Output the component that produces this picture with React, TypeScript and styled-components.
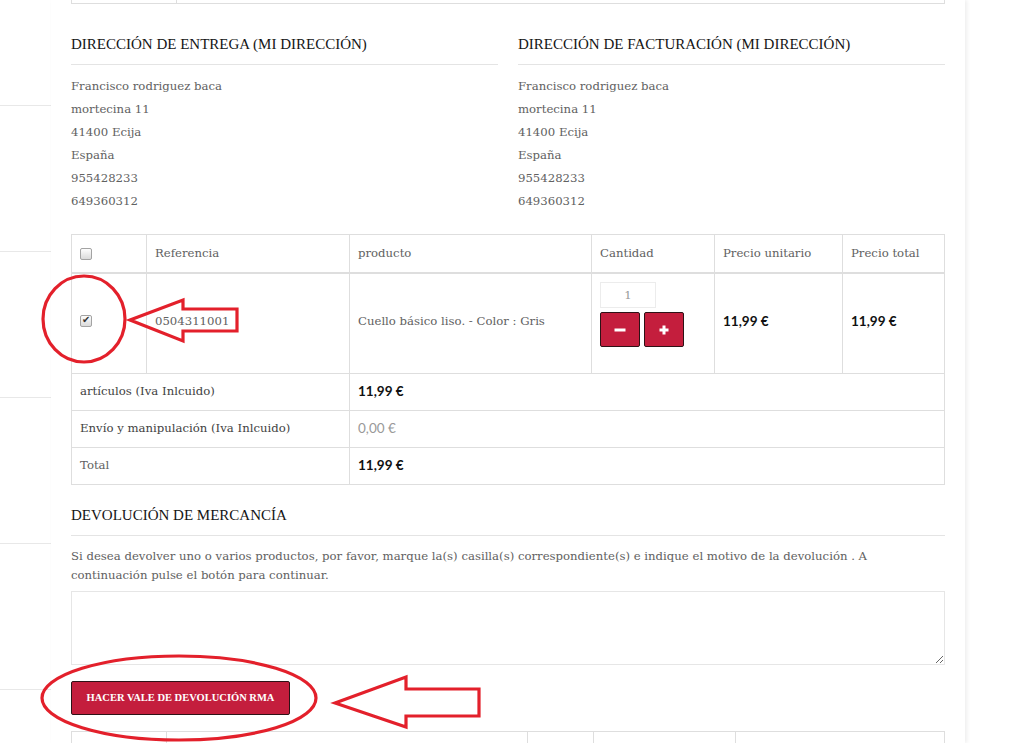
import React from "react";
import styled, { createGlobalStyle } from "styled-components";

const GlobalStyle = createGlobalStyle`
  html, body {
    margin: 0;
    padding: 0;
    background: #fff;
    overflow: hidden;
  }
  body {
    font-family: "DejaVu Serif", serif;
  }
`;

const Page = styled.div`
  position: relative;
  display: flex;
  width: 1024px;
  height: 743px;
  overflow: hidden;
  background: #fff;
`;

const Sidebar = styled.aside`
  width: 51px;
  flex-shrink: 0;
`;

const SideItem = styled.div<{ $h: number }>`
  height: ${(p) => p.$h}px;
  border-bottom: 1px solid #e8e8e8;
`;

const Main = styled.main`
  width: 914px;
  flex-shrink: 0;
  padding: 0 20px;
  box-sizing: border-box;
  box-shadow: 2px 0 4px rgba(0, 0, 0, 0.07);
`;

const TopStub = styled.div`
  display: flex;
  height: 3px;
  border: 1px solid #dedede;
  border-top: none;
`;

const StubCell = styled.div`
  width: 104px;
  border-right: 1px solid #dedede;
`;

const Addresses = styled.section`
  display: grid;
  grid-template-columns: 1fr 1fr;
  column-gap: 20px;
  margin-top: 30px;
`;

const Heading = styled.h3`
  margin: 0;
  padding-bottom: 10px;
  border-bottom: 1px solid #e4e4e4;
  font-family: "Liberation Serif", serif;
  font-weight: normal;
  font-size: 15px;
  line-height: 20px;
  color: #151515;
`;

const AddressLines = styled.div`
  margin-top: 10px;
  font-size: 11.7px;
  line-height: 23px;
  color: #616161;
`;

const Table = styled.table`
  width: 100%;
  border-collapse: collapse;
  margin-top: 21px;
  font-size: 11.7px;
  color: #616161;
  table-layout: fixed;
`;

const Th = styled.th`
  border: 1px solid #dedede;
  border-bottom-width: 2px;
  padding: 8px;
  height: 21px;
  line-height: 21px;
  font-weight: normal;
  text-align: left;
`;

const Td = styled.td<{ $top?: boolean; $dark?: boolean }>`
  border: 1px solid #dedede;
  padding: 6px 8px 7px;
  line-height: 22px;
  vertical-align: ${(p) => (p.$top ? "top" : "middle")};
  color: ${(p) => (p.$dark ? "#424242" : "#616161")};
`;

const ItemRow = styled.tr`
  height: 100px;

  & > td {
    padding-top: 7px;
    padding-bottom: 11px;
  }
  & > td:nth-child(4) {
    padding-top: 8px;
  }
`;

const Check = styled.input.attrs({ type: "checkbox" })`
  appearance: none;
  position: relative;
  display: block;
  width: 12px;
  height: 12px;
  margin: 0;
  border: 1px solid #a3a3a3;
  border-radius: 2px;
  background: linear-gradient(#fdfdfd, #dadada);

  &:checked::after {
    content: "✔";
    position: absolute;
    left: 1px;
    top: -2px;
    font-family: "DejaVu Sans", sans-serif;
    font-size: 10px;
    color: #333;
  }
`;

const QtyInput = styled.input`
  display: block;
  width: 56px;
  height: 26px;
  box-sizing: border-box;
  border: 1px solid #ececec;
  text-align: center;
  font-family: "DejaVu Serif", serif;
  font-size: 11.7px;
  color: #999;
  outline: none;
`;

const QtyButtons = styled.div`
  display: flex;
  gap: 4px;
  margin-top: 4px;
`;

const QtyButton = styled.button`
  display: flex;
  align-items: center;
  justify-content: center;
  width: 40px;
  height: 35px;
  padding: 0;
  background: #c41e3d;
  border: 1px solid #2e1216;
  border-radius: 2px;
`;

const Price = styled.span<{ $muted?: boolean }>`
  font-family: Lato, sans-serif;
  font-size: 13.5px;
  font-weight: ${(p) => (p.$muted ? 400 : 700)};
  color: ${(p) => (p.$muted ? "#999" : "#111")};
`;

const Returns = styled.section`
  margin-top: 20px;
`;

const Note = styled.p`
  margin: 11px 0 0;
  font-size: 11.7px;
  line-height: 19px;
  color: #616161;
`;

const Reason = styled.textarea`
  display: block;
  width: 100%;
  height: 74px;
  box-sizing: border-box;
  margin-top: 6px;
  border: 1px solid #e6e6e6;
  outline: none;
`;

const RmaButton = styled.button`
  display: block;
  width: 219px;
  height: 34px;
  margin-top: 16px;
  background: #c41e3d;
  border: 1px solid #2e1216;
  border-radius: 2px;
  font-family: "Liberation Serif", serif;
  font-weight: bold;
  font-size: 10.5px;
  color: #fff;
  text-transform: uppercase;
`;

const BottomTable = styled.table`
  width: 100%;
  border-collapse: collapse;
  margin-top: 16px;
  table-layout: fixed;
`;

const BottomCell = styled.td`
  height: 40px;
  border: 1px solid #dedede;
`;

const Annotations = styled.svg`
  position: absolute;
  left: 0;
  top: 0;
  pointer-events: none;
`;

const MinusIcon = () => (
  <svg width="12" height="4" viewBox="0 0 12 4">
    <rect x="0.5" y="0.5" width="11" height="3" fill="#fff" />
  </svg>
);

const PlusIcon = () => (
  <svg width="10" height="10" viewBox="0 0 10 10">
    <rect x="0.5" y="3.5" width="9" height="3" fill="#fff" />
    <rect x="3.5" y="0.5" width="3" height="9" fill="#fff" />
  </svg>
);

const address = [
  "Francisco rodriguez baca",
  "mortecina 11",
  "41400 Ecija",
  "España",
  "955428233",
  "649360312",
];

const itemCols = [75, 203, 242, 123, 128, 102];
const bottomCols = [95, 361, 66, 142, 209];

const AddressBlock = ({ title }: { title: string }) => (
  <div>
    <Heading>{title}</Heading>
    <AddressLines>
      {address.map((line) => (
        <div key={line}>{line}</div>
      ))}
    </AddressLines>
  </div>
);

export default function App() {
  return (
    <>
      <GlobalStyle />
      <Page>
        <Sidebar>
          {[105, 145, 145, 145, 145].map((h, i) => (
            <SideItem key={i} $h={h} />
          ))}
        </Sidebar>

        <Main>
          <TopStub>
            <StubCell />
          </TopStub>

          <Addresses>
            <AddressBlock title="DIRECCIÓN DE ENTREGA (MI DIRECCIÓN)" />
            <AddressBlock title="DIRECCIÓN DE FACTURACIÓN (MI DIRECCIÓN)" />
          </Addresses>

          <Table>
            <colgroup>
              {itemCols.map((w, i) => (
                <col key={i} style={{ width: w }} />
              ))}
            </colgroup>
            <thead>
              <tr>
                <Th>
                  <Check />
                </Th>
                <Th>Referencia</Th>
                <Th>producto</Th>
                <Th>Cantidad</Th>
                <Th>Precio unitario</Th>
                <Th>Precio total</Th>
              </tr>
            </thead>
            <tbody>
              <ItemRow>
                <Td>
                  <Check defaultChecked />
                </Td>
                <Td>0504311001</Td>
                <Td>Cuello básico liso. - Color : Gris</Td>
                <Td $top>
                  <QtyInput defaultValue="1" />
                  <QtyButtons>
                    <QtyButton>
                      <MinusIcon />
                    </QtyButton>
                    <QtyButton>
                      <PlusIcon />
                    </QtyButton>
                  </QtyButtons>
                </Td>
                <Td>
                  <Price>11,99 €</Price>
                </Td>
                <Td>
                  <Price>11,99 €</Price>
                </Td>
              </ItemRow>
              <tr>
                <Td colSpan={2} $dark>
                  artículos (Iva Inlcuido)
                </Td>
                <Td colSpan={4}>
                  <Price>11,99 €</Price>
                </Td>
              </tr>
              <tr>
                <Td colSpan={2} $dark>
                  Envío y manipulación (Iva Inlcuido)
                </Td>
                <Td colSpan={4}>
                  <Price $muted>0,00 €</Price>
                </Td>
              </tr>
              <tr>
                <Td colSpan={2}>Total</Td>
                <Td colSpan={4}>
                  <Price>11,99 €</Price>
                </Td>
              </tr>
            </tbody>
          </Table>

          <Returns>
            <Heading>DEVOLUCIÓN DE MERCANCÍA</Heading>
            <Note>
              Si desea devolver uno o varios productos, por favor, marque
              la(s) casilla(s) correspondiente(s) e indique el motivo de la
              devolución . A continuación pulse el botón para continuar.
            </Note>
            <Reason />
            <RmaButton>Hacer vale de devolución RMA</RmaButton>
          </Returns>

          <BottomTable>
            <colgroup>
              {bottomCols.map((w, i) => (
                <col key={i} style={{ width: w }} />
              ))}
            </colgroup>
            <tbody>
              <tr>
                {bottomCols.map((_, i) => (
                  <BottomCell key={i} />
                ))}
              </tr>
            </tbody>
          </BottomTable>
        </Main>

        <Annotations width="1024" height="743" viewBox="0 0 1024 743">
          <g fill="none" stroke="#e3202b" strokeWidth="3.2" strokeLinejoin="miter">
            <ellipse cx="84" cy="319" rx="41" ry="43" />
            <polygon points="130,320 183,300 183,309 237,309 237,331 183,331 183,341" />
            <ellipse cx="179" cy="698" rx="137" ry="42" />
            <polygon points="335,703 406,677 406,689 479,689 479,716 406,716 406,727" />
          </g>
        </Annotations>
      </Page>
    </>
  );
}
